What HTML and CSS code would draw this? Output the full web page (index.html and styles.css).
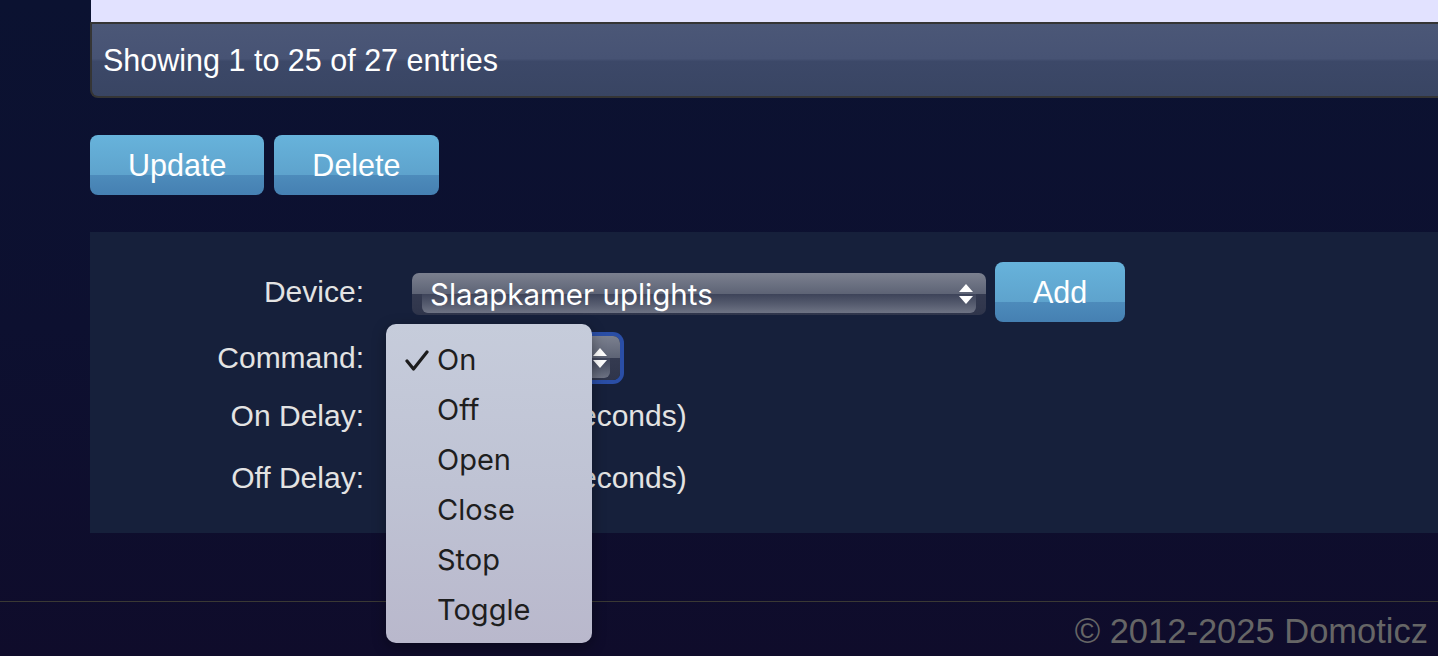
FILE: index.html
```html
<!DOCTYPE html>
<html>
<head>
<meta charset="utf-8">
<link rel="stylesheet" href="styles.css">
</head>
<body>
<div class="page">
  <div class="table-wrap">
    <div class="table-end"></div>
    <div class="info">Showing 1 to 25 of 27 entries</div>
  </div>
  <div class="actions">
    <button class="btn">Update</button>
    <button class="btn">Delete</button>
  </div>
  <div class="panel">
    <div class="row row-device">
      <div class="label">Device:</div>
      <div class="field">
        <div class="select select-device">
          <span class="sel-text">Slaapkamer uplights</span>
          <span class="arrows"><i class="up"></i><i class="down"></i></span>
        </div>
        <button class="btn btn-add">Add</button>
      </div>
    </div>
    <div class="row row-command">
      <div class="label">Command:</div>
      <div class="field">
        <div class="cmd-wrap">
          <div class="select select-command">
            <span class="sel-text"></span>
            <span class="arrows"><i class="up"></i><i class="down"></i></span>
          </div>
          <div class="popup">
            <div class="item checked"><svg class="check" width="26" height="22" viewBox="0 0 26 22"><path d="M3 11 L9.5 19 L23 2" fill="none" stroke="#1c1c1c" stroke-width="3.2" stroke-linecap="round" stroke-linejoin="round"/></svg>On</div>
            <div class="item">Off</div>
            <div class="item">Open</div>
            <div class="item">Close</div>
            <div class="item">Stop</div>
            <div class="item">Toggle</div>
          </div>
        </div>
      </div>
    </div>
    <div class="row row-ondelay">
      <div class="label">On Delay:</div>
      <div class="field">
        <div class="input"></div>
        <span class="unit">(seconds)</span>
      </div>
    </div>
    <div class="row row-offdelay">
      <div class="label">Off Delay:</div>
      <div class="field">
        <div class="input"></div>
        <span class="unit">(seconds)</span>
      </div>
    </div>
  </div>
  <div class="footer">
    <div class="copyright">© 2012-2025 Domoticz</div>
  </div>
</div>
</body>
</html>
```
FILE: styles.css
```css
html, body {
  margin: 0;
  padding: 0;
}
body {
  width: 1438px;
  height: 656px;
  overflow: hidden;
  background: linear-gradient(#0b1231 0%, #0d1030 50%, #0f0c2b 100%);
  font-family: "Liberation Sans", Arial, sans-serif;
  color: #e3e3e3;
}
.page {
  height: 656px;
  display: flex;
  flex-direction: column;
}
.table-wrap {
  margin-left: 90px;
}
.table-end {
  height: 22px;
  margin-left: 1px;
  background: #e2e2ff;
}
.info {
  height: 72px;
  border: 2px solid #353535;
  border-right: none;
  border-bottom-left-radius: 8px;
  background: linear-gradient(#4b5777 0%, #475374 48%, #3c4868 52%, #394563 100%);
  display: flex;
  align-items: center;
  padding-left: 11px;
  font-size: 30.5px;
  color: #ffffff;
}
.actions {
  margin: 37px 0 0 90px;
  display: flex;
  gap: 10px;
}
.btn {
  height: 60px;
  padding: 0 38px;
  border: none;
  border-radius: 8px;
  background: linear-gradient(#67b3db 0%, #5ea3cd 66%, #4d8bbb 67%, #4580b2 100%);
  color: #ffffff;
  font-family: "Liberation Sans", Arial, sans-serif;
  font-size: 30.5px;
  line-height: 60px;
}
.panel {
  margin: 37px 0 0 90px;
  height: 301px;
  box-sizing: border-box;
  padding-top: 30px;
  background: #16203b;
}
.row {
  display: flex;
  align-items: center;
}
.label {
  width: 274px;
  text-align: right;
  font-size: 30px;
  color: #e3e3e3;
  flex: none;
}
.field {
  margin-left: 48px;
  display: flex;
  align-items: center;
}
.row-device { height: 60px; }
.row-command { height: 52px; margin-top: 10px; }
.row-ondelay { height: 56px; margin-top: 4px; }
.row-offdelay { height: 56px; margin-top: 6px; }

.select {
  position: relative;
  height: 42px;
  border-radius: 7px;
  background: linear-gradient(#7b808f 0%, #5d6375 50%, #343a50 51%, #2f354b 100%);
  display: flex;
  align-items: center;
  box-sizing: border-box;
  padding-left: 18px;
}
.select::after {
  content: "";
  position: absolute;
  left: 10px;
  right: 10px;
  top: 21px;
  bottom: 2px;
  border-radius: 0 0 6px 6px;
  background: linear-gradient(#3d4359 0%, #545a6d 50%, #6e7384 100%);
}
.sel-text {
  position: relative;
  z-index: 1;
  font-family: Inter, "Noto Sans", sans-serif;
  font-size: 29.5px;
  color: #ffffff;
  flex: 1;
}
.arrows {
  position: relative;
  z-index: 1;
  width: 14px;
  margin-right: 13px;
  display: flex;
  flex-direction: column;
  align-items: center;
  gap: 4px;
}
.arrows i {
  display: block;
  width: 0;
  height: 0;
  border-left: 7px solid transparent;
  border-right: 7px solid transparent;
}
.arrows .up { border-bottom: 8px solid #ffffff; }
.arrows .down { border-top: 8px solid #ffffff; }

.select-device {
  width: 574px;
  margin-top: 4px;
}
.btn-add {
  margin-left: 9px;
}
.cmd-wrap {
  position: relative;
}
.select-command {
  width: 208px;
  height: 44px;
  box-shadow: 0 0 0 4px #2a4ea6;
}
.select-command::after {
  top: 22px;
}
.popup {
  position: absolute;
  left: -26px;
  top: -12px;
  width: 206px;
  height: 319px;
  box-sizing: border-box;
  padding-top: 11px;
  border-radius: 10px;
  background: linear-gradient(#c6ccdb 0%, #bfc3d4 50%, #b9b8cc 100%);
  box-shadow: 0 4px 14px rgba(0, 0, 0, 0.35);
  z-index: 5;
}
.item {
  position: relative;
  height: 50px;
  line-height: 50px;
  padding-left: 51px;
  font-family: Inter, "Noto Sans", sans-serif;
  font-size: 29px;
  color: #1e1e1e;
}
.check {
  position: absolute;
  left: 18px;
  top: 15px;
}
.input {
  width: 135px;
  height: 40px;
  border-radius: 4px;
  background: #ffffff;
}
.unit {
  margin-left: 8px;
  font-size: 30px;
  color: #e3e3e3;
}
.footer {
  margin-top: 68px;
  border-top: 1px solid #3a3934;
  padding-right: 10px;
  text-align: right;
}
.copyright {
  font-size: 34.5px;
  line-height: 40px;
  margin-top: 9px;
  color: #666666;
}
```
